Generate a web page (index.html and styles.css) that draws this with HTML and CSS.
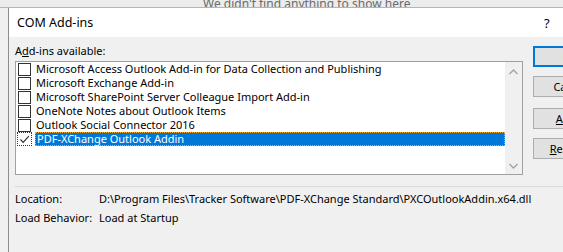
FILE: index.html
```html
<!DOCTYPE html>
<html lang="en">
<head>
    <meta charset="UTF-8">
    <title>COM Add-ins</title>
    <link rel="stylesheet" href="styles.css">
</head>
<body>
    <div class="backdrop">
        <div class="backdrop-text">We didn't find anything to show here</div>
    </div>

    <div class="dialog">
        <div class="titlebar">
            <span class="title">COM Add-ins</span>
            <span class="help">?</span>
        </div>

        <div class="content">
            <div class="main">
                <div class="label">A<u>d</u>d-ins available:</div>

                <div class="listbox">
                    <div class="items">
                        <div class="item"><span class="box"></span><span class="name">Microsoft Access Outlook Add-in for Data Collection and Publishing</span></div>
                        <div class="item"><span class="box"></span><span class="name">Microsoft Exchange Add-in</span></div>
                        <div class="item"><span class="box"></span><span class="name">Microsoft SharePoint Server Colleague Import Add-in</span></div>
                        <div class="item"><span class="box"></span><span class="name">OneNote Notes about Outlook Items</span></div>
                        <div class="item"><span class="box"></span><span class="name">Outlook Social Connector 2016</span></div>
                        <div class="item selected">
                            <span class="box checked">
                                <svg width="11" height="11" viewBox="0 0 11 11"><path d="M1.5 5.5 L4.2 8.3 L9.8 2.2" fill="none" stroke="#333" stroke-width="1.2"/></svg>
                            </span>
                            <span class="name">PDF-XChange Outlook Addin</span>
                        </div>
                    </div>
                    <div class="scrollbar">
                        <svg width="17" height="10" viewBox="0 0 17 10"><path d="M4.5 7 L8.5 3 L12.5 7" fill="none" stroke="#a3a3a3" stroke-width="1.3"/></svg>
                        <svg width="17" height="10" viewBox="0 0 17 10"><path d="M4.5 3 L8.5 7 L12.5 3" fill="none" stroke="#a3a3a3" stroke-width="1.3"/></svg>
                    </div>
                </div>
            </div>

            <div class="buttons">
                <button class="btn default">OK</button>
                <button class="btn cancel">Cancel</button>
                <button class="btn add"><u>A</u>dd...</button>
                <button class="btn remove"><u>R</u>emove</button>
            </div>
        </div>

        <div class="details">
            <div class="row"><span class="key">Location:</span><span>D:\Program Files\Tracker Software\PDF-XChange Standard\PXCOutlookAddin.x64.dll</span></div>
            <div class="row"><span class="key">Load Behavior:</span><span>Load at Startup</span></div>
        </div>
    </div>
</body>
</html>
```

FILE: styles.css
```css
body {
    margin: 0;
    width: 563px;
    height: 252px;
    overflow: hidden;
    background-color: #f0f0f0;
    font-family: "Noto Sans", "Open Sans", sans-serif;
    font-size: 11px;
    color: #000;
}
.backdrop {
    height: 7px;
    overflow: hidden;
    background-color: #ececec;
    border-bottom: 1px solid #b4b4b4;
}
.backdrop-text {
    margin-top: -5px;
    padding-left: 203px;
    font-size: 12px;
    color: #6a6a6a;
    white-space: nowrap;
}
.dialog {
    margin-left: 8px;
    border-left: 1px solid #8c8c8c;
    background-color: #f0f0f0;
    height: 244px;
    overflow: hidden;
}
.titlebar {
    height: 29px;
    background-color: #fff;
    display: flex;
    align-items: center;
    justify-content: space-between;
    padding-left: 8px;
}
.title {
    font-size: 12.5px;
}
.help {
    font-size: 13px;
    width: 19px;
}
.content {
    display: flex;
    gap: 10px;
    padding-left: 6px;
}
.main {
    width: 508px;
    flex: none;
}
.label {
    margin-top: 6px;
    height: 16px;
    line-height: 16px;
    margin-bottom: 2px;
}
.listbox {
    height: 112px;
    border: 1px solid #a0a0a0;
    background-color: #fff;
    display: flex;
}
.items {
    flex: 1;
}
.item {
    height: 14px;
    display: flex;
    align-items: center;
    line-height: 14px;
    white-space: nowrap;
}
.box {
    width: 11px;
    height: 11px;
    border: 1px solid #333;
    background-color: #fff;
    margin-left: 2px;
    margin-right: 4px;
    flex: none;
}
.name {
    padding-left: 1px;
}
.selected .box {
    border: 1px dotted #333;
    margin-left: 1px;
    width: 13px;
    height: 12px;
    display: flex;
    align-items: center;
    justify-content: center;
    margin-right: 3px;
}
.selected .name {
    flex: 1;
    height: 12px;
    line-height: 12px;
    background-color: #0078d7;
    color: #fff;
    border: 1px dotted #f0a830;
}
.scrollbar {
    width: 17px;
    background-color: #f0f0f0;
    display: flex;
    flex-direction: column;
    justify-content: space-between;
    padding: 5px 0 3px;
}
.buttons {
    display: flex;
    flex-direction: column;
    width: 75px;
    flex: none;
}
.btn {
    height: 21px;
    width: 75px;
    padding: 0;
    background-color: #e1e1e1;
    border: 1px solid #adadad;
    font-family: inherit;
    font-size: 11px;
    color: #000;
    text-align: center;
}
.default {
    border: 2px solid #0078d7;
    margin-top: 9px;
}
.cancel {
    margin-top: 9px;
}
.add {
    margin-top: 11px;
}
.remove {
    margin-top: 9px;
}
.details {
    margin: 11px 0 0 6px;
    border-top: 1px solid #dadada;
    padding-top: 2px;
}
.row {
    height: 19px;
    line-height: 19px;
    white-space: nowrap;
}
.key {
    display: inline-block;
    width: 84px;
}
```
